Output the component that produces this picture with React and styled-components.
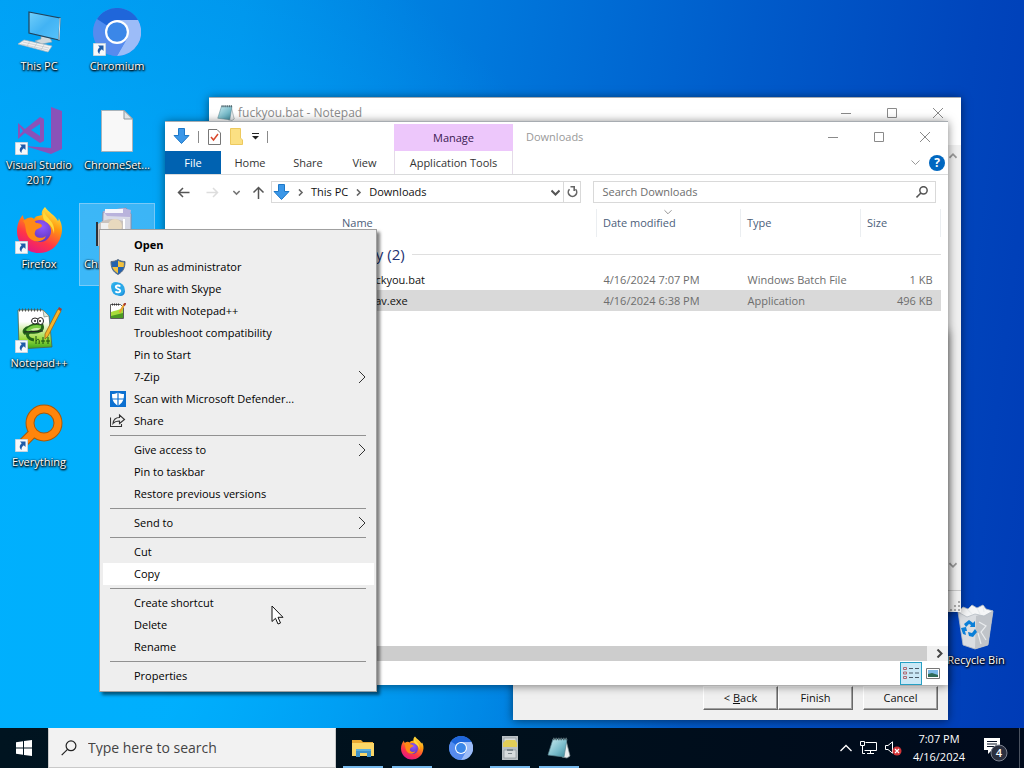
import styled, { createGlobalStyle, css } from "styled-components";

const GlobalStyle = createGlobalStyle`
  * {
    box-sizing: border-box;
  }

  body {
    margin: 0;
    overflow: hidden;
    font-family: "Open Sans", "Noto Sans", sans-serif;
    font-size: 11px;
    line-height: 16px;
    color: #111;
  }

  button, input {
    font: inherit;
    color: inherit;
    border: none;
    background: none;
    padding: 0;
    margin: 0;
  }
`;

const Screen = styled.div`
  display: flex;
  flex-direction: column;
  height: 100vh;
`;

const Desktop = styled.main`
  position: relative;
  flex: 1;
  min-height: 0;
  overflow: hidden;
  background: radial-gradient(
      ellipse 68% 100% at 0% 80%,
      rgba(0, 178, 255, 0.9) 30%,
      rgba(0, 150, 240, 0) 100%
    ),
    linear-gradient(
      97deg,
      #009cf2 0%,
      #0092ea 22%,
      #0078dc 44%,
      #005bca 68%,
      #0045bc 88%,
      #003bb6 100%
    );
`;

/* Desktop icons */
const IconGrid = styled.div`
  display: grid;
  grid-template-columns: 76px 76px 1fr 76px;
  grid-template-rows: repeat(7, 99px);
  column-gap: 2px;
  padding: 0 10px 0 1px;
`;

const Shortcut = styled.button`
  grid-column: ${(p) => p.$col};
  grid-row: ${(p) => p.$row};
  display: flex;
  flex-direction: column;
  align-items: center;
  align-self: start;
  margin-top: 5px;
  padding-top: 2px;
  gap: 2px;
  min-height: 83px;
  color: #fff;
  line-height: 15px;
  text-shadow: 1px 1px 2px #000, 0 1px 2px #000, 0 0 2px rgba(0, 0, 0, 0.8);
  border: 1px solid transparent;

  ${(p) =>
    p.$selected &&
    css`
      background: rgba(150, 205, 245, 0.4);
      border-color: rgba(160, 215, 250, 0.6);
    `}
`;

const ShortcutArt = styled.span`
  display: grid;
  width: 48px;
  height: 48px;

  > svg {
    grid-area: 1 / 1;
  }
`;

const ArrowBadge = styled.svg`
  align-self: end;
  justify-self: start;
`;

/* Windows */
const Window = styled.section`
  position: absolute;
  left: ${(p) => p.$left}px;
  top: ${(p) => p.$top}px;
  right: ${(p) => p.$right}px;
  bottom: ${(p) => p.$bottom}px;
  display: flex;
  flex-direction: column;
  background: ${(p) => p.$bg || "#fff"};
  border-top: 1px solid rgba(80, 90, 100, 0.5);
  box-shadow: 0 1px 9px rgba(0, 0, 0, 0.5);
`;

const TitleBar = styled.header`
  display: flex;
  align-items: center;
  height: 29px;
  flex: none;
`;

const NotepadTitle = styled.h1`
  margin: 0;
  padding: 0 3px;
  flex: 1;
  font-size: 12px;
  font-weight: 400;
  color: #8c8c8c;
`;

const NotepadIcon = styled.span`
  display: flex;
  padding-left: 8px;
`;

const WindowButton = styled.button`
  display: grid;
  place-items: center;
  width: 46px;
  height: 28px;
`;

const NotepadBody = styled.div`
  flex: 1;
  display: flex;
  justify-content: flex-end;
  margin-top: 18px;
`;

const VScroll = styled.div`
  display: flex;
  flex-direction: column;
  justify-content: space-between;
  align-items: center;
  width: 17px;
  padding: 7px 0 21px;
  background: #f0f0f0;
`;

const NotepadStatus = styled.footer`
  display: flex;
  justify-content: flex-end;
  align-items: flex-end;
  height: 22px;
  padding: 1px;
  background: #f0f0f0;
  border-top: 1px solid #c8c8c8;
`;

const WizardFooter = styled.footer`
  display: flex;
  justify-content: flex-end;
  margin-top: auto;
  padding: 10px;
`;

const WizardButton = styled.button`
  width: 75px;
  height: 24px;
  margin-left: ${(p) => (p.$spaced ? 10 : 0)}px;
  background: #f0f0f0;
  border: 1px solid;
  border-color: #fff #696969 #696969 #fff;
  box-shadow: inset -1px -1px 0 #a0a0a0;
`;

/* Explorer */
const QuickAccess = styled.div`
  display: flex;
  align-items: center;
  width: 229px;
  height: 29px;
  padding-left: 8px;
  gap: 8px;
`;

const QuickButton = styled.button`
  display: flex;
  margin-left: 1px;
`;

const Divider = styled.span`
  width: 1px;
  height: 12px;
  background: #8a8a8a;
`;

const ContextTab = styled.button`
  align-self: flex-end;
  width: 119px;
  height: 27px;
  background: #edc7fb;
  color: #3a1a52;
`;

const ExplorerTitle = styled.h1`
  flex: 1;
  margin: 0;
  padding-left: 13px;
  font-size: 11px;
  font-weight: 400;
  color: #999;
`;

const Ribbon = styled.nav`
  display: flex;
  height: 24px;
  flex: none;
  border-bottom: 1px solid #dadbdc;
`;

const RibbonTab = styled.button`
  width: ${(p) => p.$width}px;
  color: #333;

  ${(p) =>
    p.$primary &&
    css`
      background: #0062b1;
      color: #fff;
    `}
  ${(p) =>
    p.$context &&
    css`
      margin-left: 2px;
      border: solid #e4dbe8;
      border-width: 0 1px;
    `}
`;

const RibbonEnd = styled.div`
  display: flex;
  align-items: center;
  gap: 9px;
  margin-left: auto;
  padding-right: 3px;
`;

const HelpButton = styled.button`
  width: 16px;
  height: 16px;
  border-radius: 50%;
  background: #0067c0;
  color: #fff;
  font-size: 12px;
  font-weight: 700;
`;

const NavBar = styled.div`
  display: flex;
  align-items: center;
  height: 34px;
  flex: none;
  padding: 0 12px;
`;

const NavArrows = styled.div`
  display: grid;
  grid-template-columns: 29px 27px 19px 19px;
  align-items: center;
  width: 94px;
`;

const AddressBar = styled.div`
  display: flex;
  align-items: center;
  flex: 307;
  min-width: 0;
  height: 22px;
  padding-left: 1px;
  border: 1px solid #d9d9d9;
`;

const Crumb = styled.button`
  padding: 0 7px;
`;

const AddressEnd = styled.div`
  display: flex;
  align-items: center;
  gap: 3px;
  margin-left: auto;

  button {
    display: grid;
    place-items: center;
    height: 20px;
  }

  button:last-child {
    width: 17px;
    border-left: 1px solid #d9d9d9;
  }
`;

const SearchBox = styled.label`
  display: flex;
  align-items: center;
  flex: 325;
  min-width: 0;
  height: 22px;
  margin-left: 12px;
  padding: 0 7px 0 8px;
  border: 1px solid #d9d9d9;
`;

const SearchInput = styled.input`
  flex: 1;
  min-width: 0;
  outline: none;

  &::placeholder {
    color: #6d6d6d;
    opacity: 1;
  }
`;

const FilePane = styled.div`
  flex: 1;
  min-height: 0;
  padding: 0 7px 0 158px;
`;

const FileTable = styled.table`
  width: 100%;
  table-layout: fixed;
  border-collapse: collapse;
  text-align: left;
`;

const HeadCell = styled.th`
  width: ${(p) => p.$width};
  height: 28px;
  padding: 0 6px;
  padding-left: ${(p) => (p.$first ? 19 : 6)}px;
  font-weight: 400;
  color: #4c607a;
  border-right: 1px solid #ebeef1;
`;

const SortHeader = styled.span`
  display: inline-grid;
  position: relative;

  svg {
    position: absolute;
    top: -7px;
    right: 4px;
  }
`;

const GroupCell = styled.th`
  height: 32px;
  padding: 2px 0 0 18px;
  font-weight: 400;
`;

const GroupLabel = styled.span`
  display: flex;
  align-items: center;
  gap: 7px;
  font-size: 15px;
  color: #1e3273;

  &::after {
    content: "";
    flex: 1;
    height: 1px;
    background: #dfdfdf;
  }
`;

const FileRow = styled.tr`
  height: 21px;
  background: ${(p) => (p.$selected ? "#d9d9d9" : "transparent")};
`;

const FileCell = styled.td`
  padding: 0 8px 0 7px;
  padding-left: ${(p) => (p.$name ? 42 : 7)}px;
  color: ${(p) => (p.$name ? "#111" : "#6d6d6d")};
  text-align: ${(p) => (p.$end ? "right" : "left")};
`;

const HScroll = styled.div`
  display: flex;
  align-items: center;
  height: 15px;
  flex: none;
  background: #f0f0f0;
`;

const HThumb = styled.div`
  flex: 1;
  height: 15px;
  margin-right: 8px;
  background: #cdcdcd;
`;

const HArrow = styled.span`
  display: flex;
  padding-right: 4px;
`;

const StatusBar = styled.footer`
  display: flex;
  justify-content: flex-end;
  align-items: center;
  height: 24px;
  flex: none;
  padding-right: 4px;
`;

const ViewButton = styled.button`
  display: grid;
  place-items: center;
  width: 22px;
  height: 23px;
  border: 1px solid ${(p) => (p.$active ? "#26a0c4" : "transparent")};
  background: ${(p) => (p.$active ? "#cbe8f6" : "transparent")};
`;

/* Context menu */
const Menu = styled.div`
  position: absolute;
  left: 99px;
  top: 229px;
  width: 278px;
  padding: 4px 2px 4px 3px;
  background: #eee;
  border: 1px solid #a0a0a0;
  box-shadow: 3px 3px 3px rgba(0, 0, 0, 0.5);
`;

const MenuItem = styled.button`
  display: grid;
  grid-template-columns: 16px 1fr 8px;
  align-items: center;
  gap: 8px;
  width: 100%;
  height: 22px;
  padding: 0 8px 0 7px;
  text-align: left;
  color: #000;
  font-weight: ${(p) => (p.$bold ? 700 : 400)};
  background: ${(p) => (p.$hover ? "#fff" : "transparent")};
`;

const MenuIcon = styled.span`
  display: flex;
`;

const MenuLine = styled.hr`
  height: 1px;
  margin: 3px 8px 3px 7px;
  border: none;
  background: #919191;
`;

const Pointer = styled.svg`
  position: absolute;
  left: 271px;
  top: 605px;
`;

/* Taskbar */
const Taskbar = styled.footer`
  display: flex;
  height: 40px;
  flex: none;
  background: linear-gradient(90deg, #001420 0%, #00101c 50%, #000a1c 100%);
  color: #fff;
`;

const StartButton = styled.button`
  display: grid;
  place-items: center;
  width: 48px;
`;

const TaskSearch = styled.label`
  display: flex;
  align-items: center;
  gap: 11px;
  width: 288px;
  padding: 0 12px;
  background: #f2f2f2;
  border: 1px solid #c9c9c9;
  border-top-color: #f2f2f2;
`;

const TaskInput = styled.input`
  flex: 1;
  min-width: 0;
  font-size: 14px;
  outline: none;

  &::placeholder {
    color: #444;
    opacity: 1;
  }
`;

const TaskApps = styled.div`
  display: flex;
  gap: 1px;
  padding-left: 3px;
`;

const TaskApp = styled.button`
  display: grid;
  place-items: center;
  width: 48px;
  height: 40px;
  background: ${(p) =>
    p.$open
      ? "linear-gradient(#76b9ed, #76b9ed) center bottom / 40px 2px no-repeat"
      : "none"};
`;

const Tray = styled.div`
  display: flex;
  align-items: center;
  gap: 8px;
  margin-left: auto;
`;

const TrayButton = styled.button`
  display: flex;
`;

const Clock = styled.time`
  width: 58px;
  text-align: center;
  line-height: 18px;
`;

const Notifications = styled.button`
  display: flex;
  padding: 2px 0 0 7px;
  margin-right: 3px;
`;

const ShowDesktop = styled.button`
  width: 5px;
  height: 40px;
  border-left: 1px solid #4a5260;
`;

/* Icons */
const Chevron = ({ dir = "right", size = 8, color = "#555", width = 1 }) => {
  const paths = {
    right: "M2.500 0.500 L6.500 4.500 L2.500 8.500",
    down: "M0.500 2.500 L4.500 6.500 L8.500 2.500",
    up: "M0.500 6.500 L4.500 2.500 L8.500 6.500",
  };
  return (
    <svg width={size} height={size} viewBox="0 0 9 9" aria-hidden="true">
      <path d={paths[dir]} fill="none" stroke={color} strokeWidth={width} />
    </svg>
  );
};

const ThisPc = () => (
  <svg width="48" height="48" viewBox="0 0 48 48">
    <defs>
      <linearGradient id="pcScreen" x1="0" y1="0" x2="1" y2="1">
        <stop offset="0" stopColor="#72cffa" />
        <stop offset="0.5" stopColor="#42b3f4" />
        <stop offset="1" stopColor="#57c3fb" />
      </linearGradient>
    </defs>
    <path d="M26 28 L35 30 L37 34 L27 36 L20 33 L26 31Z" fill="#cfd8dc" stroke="#8fa3ad" strokeWidth="0.6" />
    <path d="M14 4 L45 10 L44 32 L14 25Z" fill="url(#pcScreen)" stroke="#21435c" strokeWidth="1.2" />
    <path d="M45 10 L44 32" stroke="#d6e4ec" strokeWidth="1" />
    <path d="M9 32 L37 38 L33 44 L3 36Z" fill="#f1f1f1" stroke="#aab4ba" strokeWidth="0.7" />
    <path d="M8 34 L34 40 M6 36 L33 42 M15 33 L12 38 M22 35 L19 40 M29 37 L26 42" stroke="#b9c1c6" strokeWidth="0.6" />
  </svg>
);

const Chromium = ({ size = 48 }) => (
  <svg width={size} height={size} viewBox="0 0 48 48">
    <circle cx="24" cy="24" r="24" fill="#4f8df0" />
    <path d="M24 24 L4 11 A24 24 0 0 1 45 12 L24 12Z" fill="#1f66da" />
    <path d="M24 12 L45 12 A24 24 0 0 1 24 48 L34.400 30Z" fill="#9cbcf8" />
    <path d="M3.500 12 L13.600 30 L24 36 L34.400 30 L24 48 A24 24 0 0 1 3.500 12Z" fill="#568bee" />
    <circle cx="24" cy="24" r="12" fill="#fff" />
    <circle cx="24" cy="24" r="9.800" fill="#3b87e8" />
  </svg>
);

const VisualStudio = () => (
  <svg width="48" height="48" viewBox="0 0 48 48">
    <path
      d="M36 0 L47 4 V42 L36 47 L10 39 L36 41Z M3 16 L10 22 L25 10 L29 12 V34 L25 36 L10 26 L3 32Z M25 17 L16 23 L25 29Z M5 20 V27 L8 24Z"
      fill="#8a52b8"
      fillRule="evenodd"
    />
  </svg>
);

const BlankFile = () => (
  <svg width="48" height="48" viewBox="0 0 48 48">
    <path d="M8.500 3.500 H31 L39.500 12 V44.500 H8.500Z" fill="#f8f8f8" stroke="#a8b3ba" />
    <path d="M31 3.500 V12 H39.500Z" fill="#dfe5e8" stroke="#8b979e" />
  </svg>
);

const Firefox = ({ size = 48 }) => (
  <svg width={size} height={size} viewBox="0 0 48 48">
    <defs>
      <linearGradient id="foxBody" x1="0.8" y1="0" x2="0.3" y2="1">
        <stop offset="0" stopColor="#fff44f" />
        <stop offset="0.35" stopColor="#ff980e" />
        <stop offset="0.7" stopColor="#ff3647" />
        <stop offset="1" stopColor="#e31587" />
      </linearGradient>
      <radialGradient id="foxGlobe" cx="0.6" cy="0.3" r="0.8">
        <stop offset="0" stopColor="#9059ff" />
        <stop offset="1" stopColor="#5b2fb3" />
      </radialGradient>
    </defs>
    <path
      d="M30 1 C33 6 40 9 43 15 C44 14 44 12 43 11 C47 17 48 23 46 30 C43 41 34 47 24 47 C11 47 2 37 2 25 C2 19 4 13 8 9 C8 12 9 13 10 14 C13 11 17 11 19 13 C21 9 25 10 27 9 C26 6 28 3 30 1Z"
      fill="url(#foxBody)"
    />
    <circle cx="25" cy="25" r="11" fill="url(#foxGlobe)" />
    <path d="M8 15 C13 11 19 13 21 17 C24 17 27 18 27 20 C25 23 21 22 20 26 C18 31 26 34 31 30 C28 38 15 37 12 28 C10 23 11 18 8 15Z" fill="#ff8a16" />
    <path d="M29 5 C31 13 41 15 39 28 C38 22 35 18 31 16 C28 14 27 9 29 5Z" fill="#ffd83b" />
  </svg>
);

const NotepadPlus = () => (
  <svg width="48" height="48" viewBox="0 0 48 48">
    <defs>
      <linearGradient id="nppPage" x1="0" y1="0" x2="0" y2="1">
        <stop offset="0.3" stopColor="#fff" />
        <stop offset="0.75" stopColor="#9bdb3c" />
        <stop offset="1" stopColor="#35a51d" />
      </linearGradient>
    </defs>
    <path d="M3 5 H28 L34 11 L37 42 L4 44Z" fill="url(#nppPage)" stroke="#50624a" strokeWidth="0.8" />
    <path d="M28 5 L29 12 L34 11Z" fill="#dfe8dc" stroke="#6d7a68" strokeWidth="0.6" />
    <path d="M4 5 H27" stroke="#555" strokeWidth="3" strokeDasharray="1 2" />
    <path d="M11 27 C13 20 21 19 27 20 C29 25 24 28 16 27 C10 28 12 34 19 35 M15 22 C10 23 7 26 11 29" fill="none" stroke="#23641a" strokeWidth="3" />
    <path d="M12 26 C16 21 21 21 26 22" stroke="#77cc42" strokeWidth="3" fill="none" />
    <path d="M9 27 L28 26" stroke="#222" strokeWidth="1.200" />
    <ellipse cx="20" cy="16" rx="3.500" ry="3" fill="#fff" stroke="#222" />
    <ellipse cx="25.500" cy="16" rx="3" ry="3.500" fill="#fff" stroke="#222" />
    <path d="M20 15 V17 M25 15 V17" stroke="#222" strokeWidth="1.500" />
    <path d="M21 31 V39 M21 36 C23 33 25 34 24 39 M28 32 V39 M26 36 H30 M33 32 V39 M31 36 H35" stroke="#174f12" strokeWidth="1" fill="none" />
    <path d="M43 4 L46 6 L33 31 L30 34 L30 29Z" fill="#f5b52a" stroke="#9c6416" strokeWidth="0.8" />
    <path d="M43 4 L44 2 L47 4 L46 6Z" fill="#aa3a31" />
  </svg>
);

const NotepadPlusSmall = () => (
  <svg width="16" height="16" viewBox="0 0 16 16">
    <path d="M0.500 1.500 H10.500 L13.500 4.500 V15.500 H0.500Z" fill="#fff" stroke="#5d5d5d" />
    <path d="M1 9 C5 8 9 6 13 6 V15 H1Z" fill="#a8dc3a" />
    <path d="M1 13 L13 10 V15 H1Z" fill="#4b9a22" />
    <path d="M2 1.500 H10" stroke="#333" strokeWidth="2" strokeDasharray="1 1" />
    <path d="M14.500 1 L9.500 9.500" stroke="#e8a32a" strokeWidth="2" />
    <path d="M15.500 0 L14 2.500" stroke="#a5352c" strokeWidth="2" />
  </svg>
);

const Everything = () => (
  <svg width="48" height="48" viewBox="0 0 48 48">
    <path d="M17 30 L6 41" stroke="#a95909" strokeWidth="10" />
    <circle cx="29" cy="19" r="14" fill="none" stroke="#a95909" strokeWidth="9" />
    <path d="M18 29 L6 41" stroke="#ff850b" strokeWidth="8" />
    <circle cx="29" cy="19" r="14" fill="none" stroke="#ff850b" strokeWidth="7" />
  </svg>
);

const Installer = () => (
  <svg width="48" height="48" viewBox="0 0 48 48">
    <path d="M10 6 L33 2 L38 8 V42 H9Z" fill="#dadbe8" stroke="#8a8aa5" />
    <path d="M10 5 L30 2 L38 4 L37 11 L14 10Z" fill="#b9b3dc" />
    <path d="M12 5 H30" stroke="#f6f6fb" strokeWidth="4" />
    <path d="M31 12 H37 V42 H31Z" fill="#d5d7e4" />
    <path d="M5 18 C12 12 22 12 30 15 V40 H5Z" fill="#c9c2bd" />
    <path d="M4 16 V40" stroke="#2d3137" strokeWidth="2" />
    <path d="M8 17 H16 V26 H8Z" fill="#efefef" />
    <circle cx="22" cy="20" r="7" fill="#e8d9be" />
    <path d="M31 13 V40" stroke="#fff" strokeWidth="2" />
  </svg>
);

const RecycleBin = () => (
  <svg width="48" height="48" viewBox="0 0 48 48">
    <path d="M6 10 L41 9 L36 43 L23 47 L11 43Z" fill="#dadde1" stroke="#b7bdc4" strokeWidth="0.8" />
    <path d="M24 14 L41 9 L36 43 L23 47Z" fill="#c0c4c9" />
    <path d="M6 10 L11 5 L16 7 L20 3 L25 6 L31 3 L34 7 L41 9 L32 14 L23 12 L15 15Z" fill="#f5f6f7" stroke="#b5bcc4" strokeWidth="0.8" />
    <path d="M16 8 L20 12 M25 6 L28 12 M31 4 L32 10 M27 20 L34 24 L29 30 L34 38 M26 31 L29 42" stroke="#e9ecee" strokeWidth="1.200" fill="none" />
    <path d="M12 22 L17 18 L21 21 L23 19 L23 25 L18 25 L19 23 L17 22 L14 25Z M9 26 L14 25 L15 29 L13 29 L14 33 L11 32Z M16 30 L20 31 L23 27 L25 30 L21 35 L17 34Z" fill="#0a7fd8" />
  </svg>
);

const ShortcutArrow = () => (
  <ArrowBadge width="13" height="13" viewBox="0 0 13 13">
    <path d="M0.500 0.500 H12.500 V12.500 H0.500Z" fill="#f7f9fb" stroke="#c5d4df" />
    <path d="M5 2.500 H10.500 V8 L8.800 6.300 C7 7.500 6.500 9 6.500 11 C4 9 4.300 6.500 6.700 4.300Z" fill="#1f5ba8" />
  </ArrowBadge>
);

const DownloadArrow = () => (
  <svg width="17" height="17" viewBox="0 0 17 17">
    <path d="M5.500 0.500 H11.500 V7.500 H16 L8.500 15.500 L1 7.500 H5.500Z" fill="#3b97e8" stroke="#1d78c8" />
  </svg>
);

const NotepadArt = ({ size = 18 }) => (
  <svg width={size} height={size} viewBox="0 0 24 24">
    <defs>
      <linearGradient id="padPage" x1="0" y1="0" x2="1" y2="1">
        <stop offset="0" stopColor="#cdeef2" />
        <stop offset="0.6" stopColor="#76bac9" />
        <stop offset="1" stopColor="#3c8798" />
      </linearGradient>
    </defs>
    <path d="M19 4 L23 20 L20 22 L15 21Z" fill="#eceff0" stroke="#7c8e94" strokeWidth="0.7" />
    <path d="M6 3 H20 L17 21 L1 19Z" fill="url(#padPage)" stroke="#5c8893" strokeWidth="0.7" />
    <path d="M6 3 H20" stroke="#536970" strokeWidth="2.500" strokeDasharray="1.500 1" />
  </svg>
);

const Shield = () => (
  <svg width="16" height="16" viewBox="0 0 16 16">
    <path d="M8 0.500 C10 2 12.500 2.500 15 2.500 C15 8.500 13.500 12.500 8 15.500 C2.500 12.500 1 8.500 1 2.500 C3.500 2.500 6 2 8 0.500Z" fill="#2362ae" stroke="#5b6c80" />
    <path d="M8 1.500 C10 3 12 3.400 14 3.500 L13.700 8 H8Z M2.300 8 H8 V14.500 C5 12.700 3 10.500 2.300 8Z" fill="#f3c13d" />
  </svg>
);

const Skype = () => (
  <svg width="16" height="16" viewBox="0 0 16 16">
    <circle cx="5.500" cy="5.500" r="4.500" fill="#31b4ec" />
    <circle cx="10.500" cy="10.500" r="4.500" fill="#208fda" />
    <circle cx="8" cy="8" r="6.500" fill="#2aa8e8" />
    <path d="M10.300 5.500 C9 4 5.700 4.200 5.700 6 C5.700 8.200 10.300 7.500 10.300 9.800 C10.300 11.800 6.500 12 5.500 10.300" fill="none" stroke="#fff" strokeWidth="1.800" />
  </svg>
);

const Defender = () => (
  <svg width="16" height="16" viewBox="0 0 16 16">
    <path d="M0 0 H16 V16 H0Z" fill="#0c70d0" />
    <path d="M8 1.500 C10 2.800 12 3 14 3 C14 9 12.500 12 8 14.800 C3.500 12 2 9 2 3 C4 3 6 2.800 8 1.500Z" fill="#fff" />
    <path d="M8 1 V15 M1 8 H15" stroke="#0c70d0" strokeWidth="1.200" />
  </svg>
);

const ShareArt = () => (
  <svg width="16" height="16" viewBox="0 0 16 16" fill="none" stroke="#333" strokeWidth="1.100">
    <path d="M0.500 4.500 V13.500 H11.500 V11" />
    <path d="M3 10.500 C3.500 6.500 6 4.500 9.500 4.500 V2 L14.500 6.500 L9.500 10.500 V8 C7 8 4.500 8.700 3 10.500Z" />
  </svg>
);

const Magnifier = ({ size = 13, color = "#555", width = 1.5 }) => (
  <svg width={size} height={size} viewBox="0 0 16 16" fill="none" stroke={color} strokeWidth={width}>
    <circle cx="10" cy="5.800" r="4.900" />
    <path d="M6.500 9.300 L0.700 15.200" />
  </svg>
);

const NavArrow = ({ back, up, color }) => (
  <svg width="13" height="13" viewBox="0 0 13 13" fill="none" stroke={color} strokeWidth="1.500">
    {up ? (
      <path d="M6.500 13 V1.500 M1.500 6.500 L6.500 1.500 L11.500 6.500" />
    ) : back ? (
      <path d="M12.500 6.500 H1.500 M6 2 L1.500 6.500 L6 11" />
    ) : (
      <path d="M0.500 6.500 H11.500 M7 2 L11.500 6.500 L7 11" />
    )}
  </svg>
);

const FolderArt = () => (
  <svg width="24" height="24" viewBox="0 0 24 24">
    <path d="M1 4 H10 L12 6 H22 V19 H1Z" fill="#e9a934" />
    <path d="M1 7 H23 V20 H1Z" fill="#fbd768" />
    <path d="M5 13 H20 V21 H16 V17 H9 V21 H5Z" fill="#3f92c8" />
    <path d="M5 13 H20 V15 H5Z" fill="#5eb0dc" />
  </svg>
);

const CabinetArt = () => (
  <svg width="18" height="24" viewBox="0 0 18 24">
    <path d="M1 0 H17 V24 H1Z" fill="#b9c0c4" />
    <path d="M3 2 H15 V10 H3Z M3 14 H15 V22 H3Z" fill="#d7dcde" stroke="#8c969b" strokeWidth="0.7" />
    <path d="M2 7 L5 4 H14 L16 7 V11 H2Z" fill="#e2cd57" />
    <path d="M6 13 H12 V15 H6Z M7 17 H11 V18 H7Z" fill="#7b868c" />
  </svg>
);

const SystemButtons = () => (
  <>
    <WindowButton aria-label="Minimize">
      <svg width="10" height="10"><path d="M0 5.500 H10" stroke="#8a8a8a" /></svg>
    </WindowButton>
    <WindowButton aria-label="Maximize">
      <svg width="10" height="10"><path d="M0.500 0.500 H9.500 V9.500 H0.500Z" fill="none" stroke="#8a8a8a" /></svg>
    </WindowButton>
    <WindowButton aria-label="Close">
      <svg width="10" height="10"><path d="M0 0 L10 10 M10 0 L0 10" stroke="#8a8a8a" /></svg>
    </WindowButton>
  </>
);

const shortcuts = [
  { label: "This PC", art: <ThisPc />, col: 1, row: 1 },
  { label: "Chromium", art: <Chromium />, col: 2, row: 1, link: true },
  { label: "Visual Studio 2017", art: <VisualStudio />, col: 1, row: 2, link: true },
  { label: "ChromeSet...", art: <BlankFile />, col: 2, row: 2 },
  { label: "Firefox", art: <Firefox />, col: 1, row: 3, link: true },
  { label: "ChromeSet...", art: <Installer />, col: 2, row: 3, selected: true },
  { label: "Notepad++", art: <NotepadPlus />, col: 1, row: 4, link: true },
  { label: "Everything", art: <Everything />, col: 1, row: 5, link: true },
  { label: "Recycle Bin", art: <RecycleBin />, col: 4, row: 7 },
];

const menuGroups = [
  [
    { label: "Open", bold: true },
    { label: "Run as administrator", icon: <Shield /> },
    { label: "Share with Skype", icon: <Skype /> },
    { label: "Edit with Notepad++", icon: <NotepadPlusSmall /> },
    { label: "Troubleshoot compatibility" },
    { label: "Pin to Start" },
    { label: "7-Zip", more: true },
    { label: "Scan with Microsoft Defender...", icon: <Defender /> },
    { label: "Share", icon: <ShareArt /> },
  ],
  [
    { label: "Give access to", more: true },
    { label: "Pin to taskbar" },
    { label: "Restore previous versions" },
  ],
  [{ label: "Send to", more: true }],
  [{ label: "Cut" }, { label: "Copy", hover: true }],
  [{ label: "Create shortcut" }, { label: "Delete" }, { label: "Rename" }],
  [{ label: "Properties" }],
];

const files = [
  { name: "fuckyou.bat", date: "4/16/2024 7:07 PM", type: "Windows Batch File", size: "1 KB" },
  { name: "Wav.exe", date: "4/16/2024 6:38 PM", type: "Application", size: "496 KB", selected: true },
];

const NotepadWindow = () => (
  <Window $left={209} $top={97} $right={63} $bottom={116}>
    <TitleBar>
      <NotepadIcon><NotepadArt /></NotepadIcon>
      <NotepadTitle>fuckyou.bat - Notepad</NotepadTitle>
      <SystemButtons />
    </TitleBar>
    <NotepadBody>
      <VScroll>
        <Chevron dir="up" color="#999" width={2} />
        <Chevron dir="down" color="#999" width={2} />
      </VScroll>
    </NotepadBody>
    <NotepadStatus>
      <svg width="10" height="10" fill="#aaa">
        <path d="M8 0h2v2h-2z M4 4h2v2h-2z M8 4h2v2h-2z M0 8h2v2h-2z M4 8h2v2h-2z M8 8h2v2h-2z" />
      </svg>
    </NotepadStatus>
  </Window>
);

const WizardWindow = () => (
  <Window $left={513} $top={330} $right={76} $bottom={8} $bg="#f0f0f0">
    <WizardFooter>
      <WizardButton>&lt; <u>B</u>ack</WizardButton>
      <WizardButton>Finish</WizardButton>
      <WizardButton $spaced>Cancel</WizardButton>
    </WizardFooter>
  </Window>
);

const ExplorerWindow = () => (
  <Window $left={165} $top={121} $right={76} $bottom={43}>
    <TitleBar>
      <QuickAccess>
        <DownloadArrow />
        <Divider />
        <QuickButton aria-label="Properties">
          <svg width="13" height="16" viewBox="0 0 13 16">
            <path d="M0.500 0.500 H9 L12.500 4 V15.500 H0.500Z" fill="#fff" stroke="#777" />
            <path d="M3 8 L5.500 11 L10 5" fill="none" stroke="#d9472b" strokeWidth="1.500" />
          </svg>
        </QuickButton>
        <QuickButton aria-label="New folder">
          <svg width="13" height="17" viewBox="0 0 13 17">
            <path d="M0.500 0.500 H10.500 V10 L12.500 12 V16.500 H0.500Z" fill="#fbe083" stroke="#edc95e" />
          </svg>
        </QuickButton>
        <QuickButton aria-label="Customize Quick Access Toolbar">
          <svg width="7" height="7"><path d="M0 0.500 H7" stroke="#222" /><path d="M0 3 H7 L3.500 6.500Z" fill="#222" /></svg>
        </QuickButton>
        <Divider />
      </QuickAccess>
      <ContextTab>Manage</ContextTab>
      <ExplorerTitle>Downloads</ExplorerTitle>
      <SystemButtons />
    </TitleBar>
    <Ribbon>
      <RibbonTab $width={56} $primary>File</RibbonTab>
      <RibbonTab $width={58}>Home</RibbonTab>
      <RibbonTab $width={58}>Share</RibbonTab>
      <RibbonTab $width={55}>View</RibbonTab>
      <RibbonTab $width={119} $context>Application Tools</RibbonTab>
      <RibbonEnd>
        <Chevron dir="down" color="#999" size={9} />
        <HelpButton aria-label="Help">?</HelpButton>
      </RibbonEnd>
    </Ribbon>
    <NavBar>
      <NavArrows>
        <NavArrow back color="#555" />
        <NavArrow color="#ddd" />
        <Chevron dir="down" color="#777" size={7} width={2} />
        <NavArrow up color="#555" />
      </NavArrows>
      <AddressBar>
        <DownloadArrow />
        <Crumb aria-label="Root"><Chevron color="#666" width={2} size={7} /></Crumb>
        <span>This PC</span>
        <Crumb aria-label="This PC folders"><Chevron color="#666" width={2} size={7} /></Crumb>
        <span>Downloads</span>
        <AddressEnd>
          <button aria-label="Previous locations"><Chevron dir="down" width={2} size={9} /></button>
          <button aria-label="Refresh">
            <svg width="11" height="12" viewBox="0 0 11 12" fill="none" stroke="#666" strokeWidth="1.600">
              <path d="M2.500 3.200 A4.200 4.200 0 1 0 8.500 3.200" />
              <path d="M3.500 0.800 H7.200 V5" />
            </svg>
          </button>
        </AddressEnd>
      </AddressBar>
      <SearchBox>
        <SearchInput placeholder="Search Downloads" aria-label="Search Downloads" />
        <Magnifier size={12} width={2} />
      </SearchBox>
    </NavBar>
    <FilePane>
      <FileTable>
        <thead>
          <tr>
            <HeadCell $first>Name</HeadCell>
            <HeadCell $width="144px">
              <SortHeader>Date modified<Chevron dir="down" color="#888" size={8} /></SortHeader>
            </HeadCell>
            <HeadCell $width="120px">Type</HeadCell>
            <HeadCell $width="80px">Size</HeadCell>
          </tr>
        </thead>
        <tbody>
          <tr>
            <GroupCell colSpan={4}><GroupLabel>Today (2)</GroupLabel></GroupCell>
          </tr>
          {files.map((file) => (
            <FileRow key={file.name} $selected={file.selected}>
              <FileCell $name>{file.name}</FileCell>
              <FileCell>{file.date}</FileCell>
              <FileCell>{file.type}</FileCell>
              <FileCell $end>{file.size}</FileCell>
            </FileRow>
          ))}
        </tbody>
      </FileTable>
    </FilePane>
    <HScroll>
      <HThumb />
      <HArrow><Chevron size={9} color="#444" width={2} /></HArrow>
    </HScroll>
    <StatusBar>
      <ViewButton $active aria-label="Details view">
        <svg width="16" height="14" fill="none">
          <path d="M0.500 1.500 h3 v2 h-3z M0.500 6 h3 v2 h-3z M0.500 10.500 h3 v2 h-3z" stroke="#b06a74" />
          <path d="M6 2.500 h4 M12 2.500 h4 M6 7 h4 M12 7 h4 M6 11.500 h4 M12 11.500 h4" stroke="#4a5a68" />
        </svg>
      </ViewButton>
      <ViewButton aria-label="Large icons view">
        <svg width="14" height="11">
          <path d="M0.500 0.500 H13.500 V10.500 H0.500Z" fill="#fff" stroke="#777" />
          <path d="M2 2 H12 V9 H2Z" fill="#7db9e6" />
          <path d="M2 6 L6 5 L12 7 V9 H2Z" fill="#2f6b58" />
        </svg>
      </ViewButton>
    </StatusBar>
  </Window>
);

const ContextMenu = () => (
  <Menu role="menu">
    {menuGroups.map((group, i) => (
      <div key={i}>
        {i > 0 && <MenuLine />}
        {group.map((item) => (
          <MenuItem key={item.label} role="menuitem" $bold={item.bold} $hover={item.hover}>
            <MenuIcon>{item.icon}</MenuIcon>
            <span>{item.label}</span>
            {item.more && (
              <svg width="8" height="14" fill="none" stroke="#333">
                <path d="M1 1 L7 7 L1 13" />
              </svg>
            )}
          </MenuItem>
        ))}
      </div>
    ))}
  </Menu>
);

const App = () => {
  return (
    <>
      <GlobalStyle />
      <Screen>
        <Desktop>
          <IconGrid>
            {shortcuts.map((s) => (
              <Shortcut key={`${s.col}-${s.row}`} $col={s.col} $row={s.row} $selected={s.selected}>
                <ShortcutArt>
                  {s.art}
                  {s.link && <ShortcutArrow />}
                </ShortcutArt>
                <span>{s.label}</span>
              </Shortcut>
            ))}
          </IconGrid>
          <NotepadWindow />
          <WizardWindow />
          <ExplorerWindow />
          <ContextMenu />
          <Pointer width="13" height="21" viewBox="0 0 13 21">
            <path d="M1 1 V16.500 L4.500 13.300 L7 19 L9.500 18 L7 12.300 H12Z" fill="#fff" stroke="#111" />
          </Pointer>
        </Desktop>
        <Taskbar>
          <StartButton aria-label="Start">
            <svg width="16" height="16" fill="#fff">
              <path d="M0 2.300 L7 1.200 V7.500 H0Z M8 1 L16 0 V7.500 H8Z M0 8.500 H7 V14.800 L0 13.700Z M8 8.500 H16 V16 L8 15Z" />
            </svg>
          </StartButton>
          <TaskSearch>
            <Magnifier size={16} color="#222" width={1.2} />
            <TaskInput placeholder="Type here to search" aria-label="Type here to search" />
          </TaskSearch>
          <TaskApps>
            <TaskApp $open aria-label="File Explorer"><FolderArt /></TaskApp>
            <TaskApp $open aria-label="Firefox"><Firefox size={24} /></TaskApp>
            <TaskApp aria-label="Chromium"><Chromium size={24} /></TaskApp>
            <TaskApp $open aria-label="Archive"><CabinetArt /></TaskApp>
            <TaskApp $open aria-label="Notepad"><NotepadArt size={24} /></TaskApp>
          </TaskApps>
          <Tray>
            <TrayButton aria-label="Show hidden icons">
              <svg width="12" height="8"><path d="M0.500 7 L6 1.500 L11.500 7" fill="none" stroke="#fff" strokeWidth="1.300" /></svg>
            </TrayButton>
            <TrayButton aria-label="Network">
              <svg width="17" height="14" fill="none" stroke="#fff">
                <path d="M5.500 1.500 H16.500 V9.500 H4.500 M0.500 0.500 H4.500 V4.500 H0.500Z M2.500 4.500 V12.500 H5 M10.500 9.500 V12.500 M7 12.500 H14" />
              </svg>
            </TrayButton>
            <TrayButton aria-label="Volume muted">
              <svg width="17" height="15">
                <path d="M0.500 4.500 H3 L7.500 0.800 V12.200 L3 8.500 H0.500Z" fill="none" stroke="#fff" />
                <circle cx="12" cy="10" r="4.500" fill="#d13438" />
                <path d="M10 8 L14 12 M14 8 L10 12" stroke="#fff" strokeWidth="1.200" />
              </svg>
            </TrayButton>
            <Clock>
              7:07 PM
              <br />
              4/16/2024
            </Clock>
            <Notifications aria-label="4 new notifications">
              <svg width="25" height="25" viewBox="0 0 25 25">
                <path d="M1 1 H17 V13 H9 L5 17 V13 H1Z" fill="#fff" />
                <path d="M4 4.500 H14 M4 7 H14 M4 9.500 H11" stroke="#0a1428" />
                <circle cx="16" cy="16" r="8" fill="#2b3040" stroke="#7c8290" />
                <text x="16" y="20" fontSize="11" fontWeight="600" textAnchor="middle" fill="#fff">4</text>
              </svg>
            </Notifications>
            <ShowDesktop aria-label="Show desktop" />
          </Tray>
        </Taskbar>
      </Screen>
    </>
  );
};

export default App;
